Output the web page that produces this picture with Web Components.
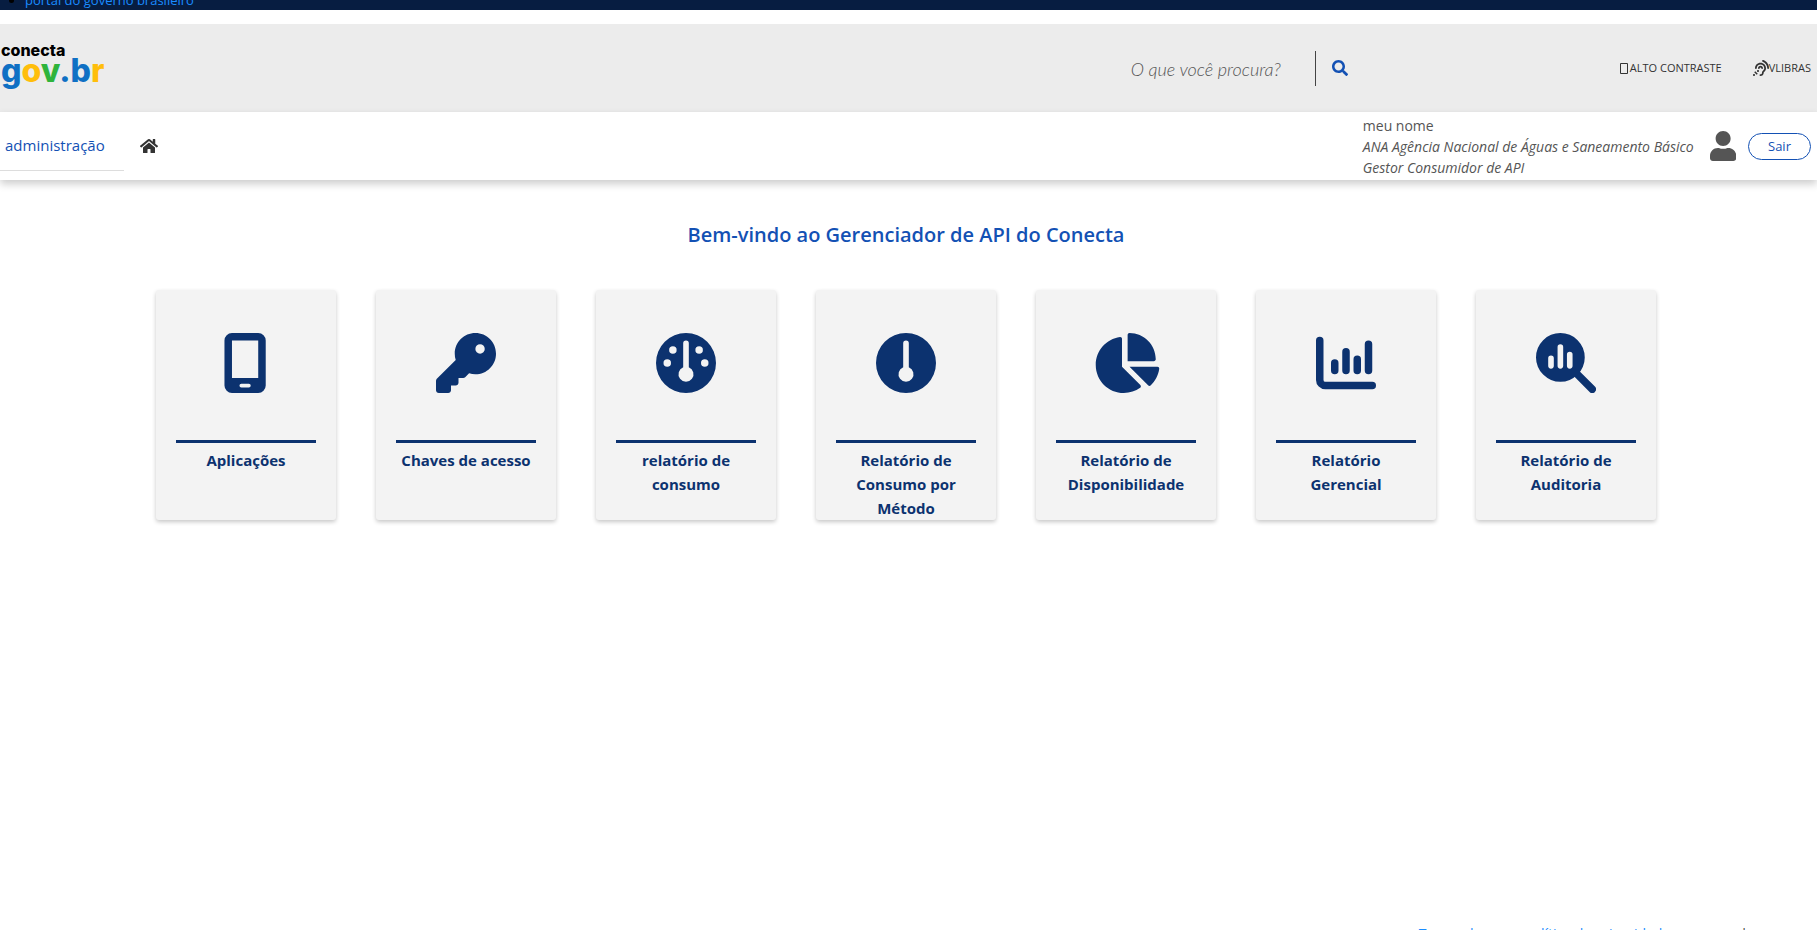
<!DOCTYPE html>
<html lang="pt-BR">
<head>
<meta charset="utf-8">
<title>Gerenciador de API do Conecta</title>
<style>
  body { margin: 0; background: #fff; color: #555; font-family: "Open Sans", "Noto Sans", sans-serif; }
</style>
</head>
<body>
<gov-app></gov-app>

<script>
const define = (name, html, setup) => {
  const template = document.createElement('template');
  template.innerHTML = html;
  customElements.define(name, class extends HTMLElement {
    connectedCallback() {
      if (this.shadowRoot) return;
      this.attachShadow({ mode: 'open' }).append(template.content.cloneNode(true));
      if (setup) setup(this);
    }
  });
};

const ICONS = {
  phone: ['0 0 384 512', '<path fill-rule="evenodd" d="M68 0H292a64 64 0 0 1 64 64V448a64 64 0 0 1-64 64H68a64 64 0 0 1-64-64V64A64 64 0 0 1 68 0zM68 64V384H292V64zM148 432a16 16 0 0 0 0 32h64a16 16 0 0 0 0-32z"/>'],
  key: ['0 0 512 512', '<path d="M336 352c97.200 0 176-78.800 176-176S433.200 0 336 0S160 78.800 160 176c0 18.700 2.900 36.800 8.300 53.700L7 391c-4.500 4.500-7 10.600-7 17v80c0 13.300 10.700 24 24 24h80c13.300 0 24-10.700 24-24V448h40c13.300 0 24-10.700 24-24V384h40c6.400 0 12.500-2.500 17-7l33.300-33.300c16.900 5.400 35 8.300 53.700 8.300zM376 96a40 40 0 1 1 0 80 40 40 0 1 1 0-80z"/>'],
  gauge: ['0 0 512 512', '<path fill-rule="evenodd" d="M256 0a256 256 0 1 1 0 512a256 256 0 1 1 0-512zM232 88V293a64 64 0 1 0 48 0V88a24 24 0 0 0-48 0zM96 224a32 32 0 1 0 0 64a32 32 0 1 0 0-64zM144 112a32 32 0 1 0 0 64a32 32 0 1 0 0-64zM368 112a32 32 0 1 0 0 64a32 32 0 1 0 0-64zM416 224a32 32 0 1 0 0 64a32 32 0 1 0 0-64z"/>'],
  gaugeSimple: ['0 0 512 512', '<path fill-rule="evenodd" d="M256 0a256 256 0 1 1 0 512a256 256 0 1 1 0-512zM232 88V293a64 64 0 1 0 48 0V88a24 24 0 0 0-48 0z"/>'],
  pie: ['0 0 576 512', '<path d="M304 240V16.600c0-9 7-16.600 16-16.600C443.700 0 544 100.300 544 224c0 9-7.600 16-16.600 16H304zM32 272C32 150.700 122.100 50.300 239 34.300c9.200-1.300 17 6.100 17 15.400V288L412.500 444.500c6.700 6.700 6.200 17.700-1.500 23.100C371.800 495.600 323.800 512 272 512C139.500 512 32 404.600 32 272zm526.400 16c9.300 0 16.600 7.800 15.400 17c-7.700 55.900-34.600 105.600-73.900 142.300c-6 5.600-15.400 5.200-21.200-.7L320 288H558.400z"/>'],
  columns: ['0 0 512 512', '<path fill="none" stroke="currentColor" stroke-width="64" stroke-linecap="round" d="M32 64V400a48 48 0 0 0 48 48H480M160 256V320M256 160V320M352 224V320M448 96V320"/>'],
  audit: ['0 0 512 512', '<path fill="none" stroke="currentColor" stroke-width="64" stroke-linecap="round" d="M330 330L480 480"/><path fill-rule="evenodd" d="M208 0a208 208 0 1 1 0 416a208 208 0 1 1 0-416zM104 216v64a24 24 0 0 0 48 0v-64a24 24 0 0 0-48 0zM184 120v160a24 24 0 0 0 48 0v-160a24 24 0 0 0-48 0zM264 184v96a24 24 0 0 0 48 0v-96a24 24 0 0 0-48 0z"/>'],
  home: ['0 0 576 512', '<path d="M280.370 148.260L96 300.110V464a16 16 0 0 0 16 16l112.060-.29a16 16 0 0 0 15.920-16V368a16 16 0 0 1 16-16h64a16 16 0 0 1 16 16v95.640a16 16 0 0 0 16 16.050L464 480a16 16 0 0 0 16-16V300L295.670 148.260a12.190 12.190 0 0 0-15.300 0zM571.600 251.470L488 182.560V44.050a12 12 0 0 0-12-12h-56a12 12 0 0 0-12 12v72.610L318.470 43a48 48 0 0 0-61 0L4.340 251.470a12 12 0 0 0-1.600 16.900l25.500 31A12 12 0 0 0 45.150 301l235.220-193.740a12.190 12.190 0 0 1 15.300 0L530.900 301a12 12 0 0 0 16.900-1.600l25.500-31a12 12 0 0 0-1.700-16.930z"/>'],
  user: ['0 0 448 512', '<path d="M224 256c70.700 0 128-57.300 128-128S294.700 0 224 0 96 57.300 96 128s57.300 128 128 128zm89.600 32h-16.700c-22.200 10.200-46.900 16-72.900 16s-50.600-5.800-72.900-16h-16.700C60.200 288 0 348.200 0 422.400V464c0 26.500 21.500 48 48 48h352c26.500 0 48-21.500 48-48v-41.600c0-74.200-60.200-134.400-134.400-134.400z"/>'],
  search: ['0 0 512 512', '<path d="M505 442.700L405.300 343c-4.500-4.500-10.600-7-17-7H372c27.600-35.300 44-79.700 44-128C416 93.100 322.900 0 208 0S0 93.100 0 208s93.100 208 208 208c48.300 0 92.700-16.400 128-44v16.300c0 6.400 2.500 12.500 7 17l99.700 99.700c9.400 9.400 24.600 9.400 33.900 0l28.300-28.300c9.400-9.400 9.400-24.600.1-34zM208 336c-70.700 0-128-57.200-128-128 0-70.700 57.200-128 128-128 70.700 0 128 57.200 128 128 0 70.700-57.200 128-128 128z"/>'],
  ear: ['0 0 512 512', '<path d="M216 260c0 15.464-12.536 28-28 28s-28-12.536-28-28c0-44.112 35.888-80 80-80s80 35.888 80 80c0 15.464-12.536 28-28 28s-28-12.536-28-28c0-13.234-10.767-24-24-24s-24 10.766-24 24zm24-176c-97.047 0-176 78.953-176 176 0 15.464 12.536 28 28 28s28-12.536 28-28c0-66.168 53.832-120 120-120s120 53.832 120 120c0 75.164-71.009 70.311-71.997 143.622L288 404c0 28.673-23.327 52-52 52-15.464 0-28 12.536-28 28s12.536 28 28 28c59.475 0 107.876-48.328 108-107.774.595-34.428 72-48.240 72-144.226 0-97.047-78.953-176-176-176zm-80 236c-17.673 0-32 14.327-32 32s14.327 32 32 32 32-14.327 32-32-14.327-32-32-32zM32 448c-17.673 0-32 14.327-32 32s14.327 32 32 32 32-14.327 32-32-14.327-32-32-32zm480-187.993c0-1.518-.012-3.025-.045-4.531C510.076 140.525 436.157 38.470 327.994 1.511c-14.633-4.998-30.549 2.809-35.550 17.443-5 14.633 2.810 30.549 17.444 35.550 85.906 29.354 144.610 110.513 146.077 201.953l.003.188c.026 1.118.033 2.236.033 3.363 0 15.464 12.536 28 28 28s28.001-12.536 28.001-28zM152.971 439.029l-80-80L39.030 392.970l80 80 33.941-33.941z"/>'],
  box: ['0 0 8 11', '<path fill="none" stroke="currentColor" d="M.5.5h7v10h-7z"/>']
};

define('gov-icon', `
  <style>
    :host { display: block; flex: none; height: 16px; }
    svg { display: block; height: 100%; fill: currentColor; }
  </style>
  <svg aria-hidden="true"></svg>`, el => {
  const [box, art] = ICONS[el.getAttribute('name')];
  const svg = el.shadowRoot.querySelector('svg');
  svg.setAttribute('viewBox', box);
  svg.innerHTML = art;
});

define('gov-topbar', `
  <style>
    :host { display: flex; align-items: flex-end; height: 10px; overflow: hidden; background: #071d41; color: #000; }
    ul { margin: 0; padding: 0 0 0 25px; font-size: 13px; line-height: 20px; }
    a { color: #1a8cff; text-decoration: none; }
  </style>
  <ul><li><a href="#brasil">portal do governo brasileiro</a></li></ul>`);

define('gov-logo', `
  <style>
    :host { display: block; font-family: Inter, sans-serif; font-weight: 800; }
    a { display: grid; color: #000; text-decoration: none; }
    .top { font-size: 16px; line-height: 16px; }
    .name { font-size: 32px; line-height: 26px; }
    .b { color: #0f70c4; } .y { color: #ffbe0b; } .g { color: #2fb43c; }
  </style>
  <a href="#inicio"><span class="top">conecta</span><span class="name"><span class="b">g</span><span class="y">o</span><span class="g">v</span><span class="b">.b</span><span class="y">r</span></span></a>`);

define('gov-search', `
  <style>
    :host { display: block; }
    form { display: flex; align-items: center; }
    input { box-sizing: border-box; width: 185px; height: 35px; padding: 2px 0 0; border: 0; border-right: 1px solid #444; outline: 0; background: none; font: italic 300 18px Lato, sans-serif; }
    input::placeholder { color: #555; opacity: 1; }
    button { padding: 0 16px; border: 0; background: none; color: #1351b4; }
  </style>
  <form role="search"><input type="text" aria-label="Pesquisar" placeholder="O que você procura?"><button type="button" aria-label="Buscar"><gov-icon name="search"></gov-icon></button></form>`);

define('gov-header', `
  <style>
    :host { display: flex; align-items: center; box-sizing: border-box; min-height: 88px; margin-top: 14px; padding: 0 6px 0 1px; background: #ececec; }
    gov-logo { align-self: flex-start; padding-top: 18px; }
    gov-search { margin: 0 256px 0 auto; }
    nav { display: flex; gap: 31px; }
    nav a { display: flex; align-items: center; color: #333; font-size: 11px; line-height: 16px; text-decoration: none; }
    .contrast { gap: 2px; }
    .contrast gov-icon { height: 11px; }
  </style>
  <gov-logo></gov-logo>
  <gov-search></gov-search>
  <nav aria-label="Acessibilidade">
    <a class="contrast" href="#contraste"><gov-icon name="box"></gov-icon>ALTO CONTRASTE</a>
    <a href="#vlibras"><gov-icon name="ear"></gov-icon>VLIBRAS</a>
  </nav>`);

define('gov-menu', `
  <style>
    :host { display: flex; box-sizing: border-box; min-height: 68px; padding-right: 6px; background: #fff; box-shadow: 0 4px 8px rgba(0, 0, 0, .2); }
    a { text-decoration: none; }
    .admin { align-self: flex-start; box-sizing: border-box; width: 124px; padding: 21px 0 13px 5px; border-bottom: 1px solid #ddd; color: #1351b4; font-size: 15px; line-height: 24px; }
    .home { align-self: center; margin: 0 auto 0 16px; color: #333; }
    .user { align-self: center; font-size: 14px; line-height: 21px; }
    .user i { display: block; }
    .avatar { align-self: center; height: 30px; margin: 0 12px 0 16px; color: #555; }
    button { align-self: center; width: 63px; height: 27px; padding: 0; border: 1px solid #1351b4; border-radius: 14px; background: #fff; color: #1351b4; font: 13px "Open Sans", sans-serif; }
  </style>
  <a class="admin" href="#admin">administração</a>
  <a class="home" href="#inicio" aria-label="Início"><gov-icon name="home"></gov-icon></a>
  <div class="user">meu nome<i>ANA Agência Nacional de Águas e Saneamento Básico</i><i>Gestor Consumidor de API</i></div>
  <gov-icon class="avatar" name="user"></gov-icon>
  <button type="button">Sair</button>`);

define('gov-card', `
  <style>
    :host { display: block; width: 180px; }
    a { display: flex; flex-direction: column; align-items: center; box-sizing: border-box; min-height: 230px; padding: 43px 20px 0; border-radius: 3px; background: #f3f3f3; box-shadow: 0 2px 4px rgba(0, 0, 0, .22); color: #0c326f; text-align: center; text-decoration: none; }
    gov-icon { height: 60px; }
    .label { align-self: stretch; margin-top: 47px; padding-top: 5px; border-top: 3px solid; font-size: 15px; font-weight: 700; line-height: 24px; }
  </style>
  <a><span class="label"><slot></slot></span></a>`, el => {
  const icon = document.createElement('gov-icon');
  icon.setAttribute('name', el.getAttribute('icon'));
  const link = el.shadowRoot.querySelector('a');
  link.prepend(icon);
  link.href = el.getAttribute('href');
});

define('gov-footer', `
  <style>
    :host { display: flex; justify-content: flex-end; gap: 70px; padding-right: 69px; font-size: 14px; line-height: 20px; color: #333; }
    a { color: #1a8cff; text-decoration: none; }
  </style>
  <a href="#termo">Termo de uso e política de privacidade</a><span>|</span>`);

define('gov-app', `
  <style>
    :host { display: flex; flex-direction: column; height: 100vh; overflow: hidden; }
    gov-topbar, gov-header, gov-menu, gov-footer { flex: none; }
    main { flex: 1 0 auto; padding: 39px 5px 0 0; }
    h1 { margin: 0; color: #1351b4; font-size: 20px; font-weight: 600; line-height: 32px; text-align: center; }
    .cards { display: flex; flex-wrap: wrap; justify-content: center; gap: 40px; margin-top: 39px; }
    gov-footer { margin-bottom: -14px; }
  </style>
  <gov-topbar></gov-topbar>
  <gov-header></gov-header>
  <gov-menu></gov-menu>
  <main>
    <h1>Bem-vindo ao Gerenciador de API do Conecta</h1>
    <div class="cards">
      <gov-card icon="phone" href="#aplicacoes">Aplicações</gov-card>
      <gov-card icon="key" href="#chaves">Chaves de acesso</gov-card>
      <gov-card icon="gauge" href="#consumo">relatório de consumo</gov-card>
      <gov-card icon="gaugeSimple" href="#metodo">Relatório de Consumo por Método</gov-card>
      <gov-card icon="pie" href="#disponibilidade">Relatório de Disponibilidade</gov-card>
      <gov-card icon="columns" href="#gerencial">Relatório Gerencial</gov-card>
      <gov-card icon="audit" href="#auditoria">Relatório de Auditoria</gov-card>
    </div>
  </main>
  <gov-footer></gov-footer>`);
</script>
</body>
</html>
